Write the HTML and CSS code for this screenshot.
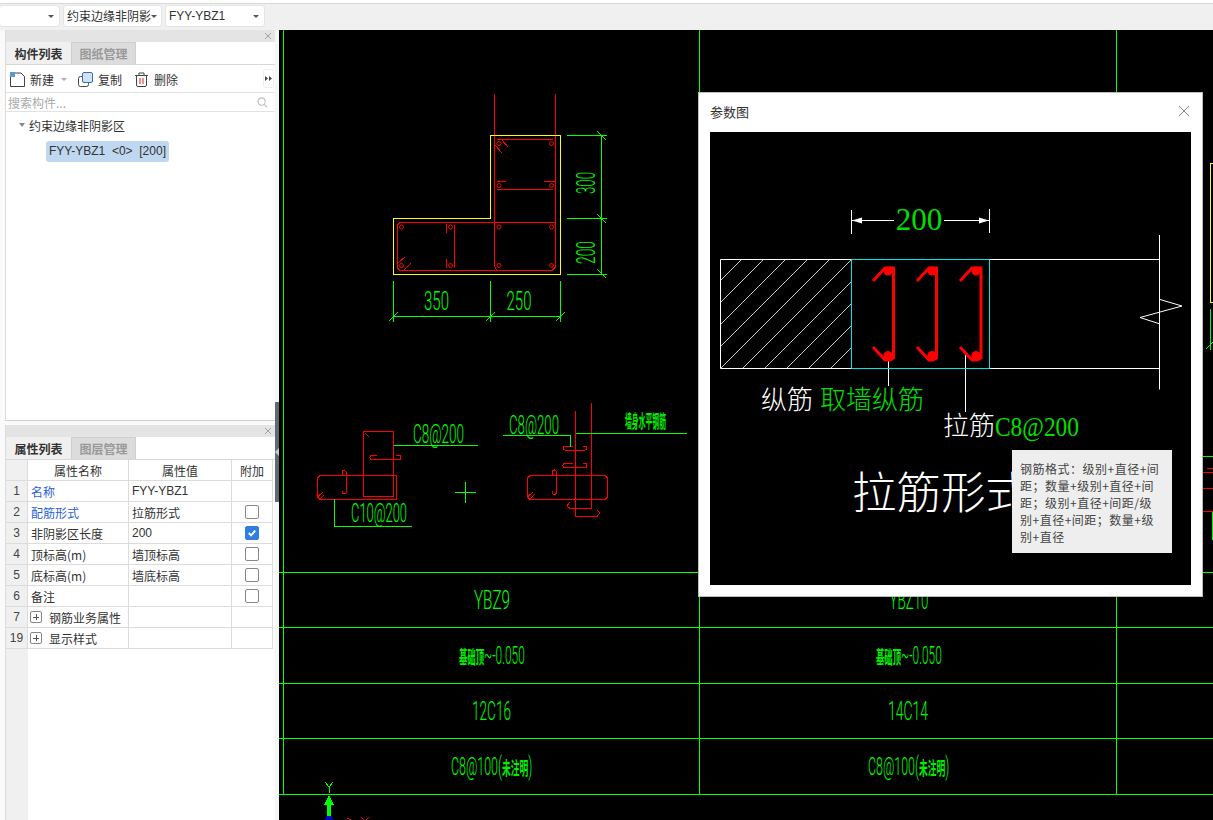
FILE: index.html
```html
<!DOCTYPE html>
<html lang="zh">
<head>
<meta charset="utf-8">
<title>参数图</title>
<link rel="stylesheet" href="styles.css">
</head>
<body>
<div class="app">
  <header class="topbar">
    <div class="combo combo-a"><span class="combo-text"></span><i class="caret"></i></div>
    <div class="combo combo-b"><span class="combo-text">约束边缘非阴影</span><i class="caret"></i></div>
    <div class="combo combo-c"><span class="combo-text">FYY-YBZ1</span><i class="caret"></i></div>
  </header>
  <div class="main">
    <aside class="sidebar">
      <section class="panel panel-top">
        <div class="panel-head"><svg class="x" viewBox="0 0 8 8"><path d="M1 1l6 6M7 1L1 7"/></svg></div>
        <div class="tabs">
          <div class="tab active">构件列表</div>
          <div class="tab">图纸管理</div>
        </div>
        <div class="toolbar">
          <span class="tool tool-new">
            <svg class="ico" viewBox="0 0 15 15"><path class="ol" d="M0.5 4V14.500H14.500V4.500L11 1H5"/><path class="blue" d="M0 0h5v5H0z"/></svg>
            新建<i class="caret light"></i>
          </span>
          <span class="tool tool-copy">
            <svg class="ico" viewBox="0 0 15 15"><rect class="ol" x="0.500" y="4.500" width="10" height="10" rx="2"/><rect class="fillblue" x="4.500" y="0.500" width="10" height="10" rx="1.500"/></svg>
            复制
          </span>
          <span class="tool tool-del">
            <svg class="ico" viewBox="0 0 13 15"><path class="ol" d="M0 3.500H13M4 3V1H9V3M1.500 3.500V13a1.500 1.500 0 0 0 1.500 1.500h7a1.500 1.500 0 0 0 1.500-1.500V3.500"/><path class="red" d="M5 6V12M8 6V12"/></svg>
            删除
          </span>
          <span class="more"><svg viewBox="0 0 7 5"><path d="M0 0l3 2.500L0 5ZM4 0l3 2.500L4 5Z"/></svg></span>
        </div>
        <div class="search">
          <span>搜索构件...</span>
          <svg class="search-ico" viewBox="0 0 12 12"><circle cx="5" cy="5" r="4"/><path d="M8 8l3 3"/></svg>
        </div>
        <div class="tree">
          <div class="tree-root"><i class="caret"></i>约束边缘非阴影区</div>
          <div class="tree-leaf">FYY-YBZ1 &nbsp;&lt;0&gt; &nbsp;[200]</div>
        </div>
      </section>
      <section class="panel panel-bottom">
        <div class="panel-head"><svg class="x" viewBox="0 0 8 8"><path d="M1 1l6 6M7 1L1 7"/></svg></div>
        <div class="tabs">
          <div class="tab active">属性列表</div>
          <div class="tab">图层管理</div>
        </div>
        <div class="grid">
          <div class="row head"><div class="n"></div><div class="k">属性名称</div><div class="v">属性值</div><div class="c">附加</div></div>
          <div class="row"><div class="n">1</div><div class="k link">名称</div><div class="v">FYY-YBZ1</div><div class="c"></div></div>
          <div class="row"><div class="n">2</div><div class="k link">配筋形式</div><div class="v">拉筋形式</div><div class="c"><i class="check"></i></div></div>
          <div class="row"><div class="n">3</div><div class="k">非阴影区长度</div><div class="v">200</div><div class="c"><i class="check on"><svg viewBox="0 0 13 13"><path d="M3 6.500l2.500 2.500L10 4"/></svg></i></div></div>
          <div class="row"><div class="n">4</div><div class="k">顶标高(m)</div><div class="v">墙顶标高</div><div class="c"><i class="check"></i></div></div>
          <div class="row"><div class="n">5</div><div class="k">底标高(m)</div><div class="v">墙底标高</div><div class="c"><i class="check"></i></div></div>
          <div class="row"><div class="n">6</div><div class="k">备注</div><div class="v"></div><div class="c"><i class="check"></i></div></div>
          <div class="row"><div class="n">7</div><div class="k"><i class="plus"></i>钢筋业务属性</div><div class="v"></div><div class="c"></div></div>
          <div class="row"><div class="n">19</div><div class="k"><i class="plus"></i>显示样式</div><div class="v"></div><div class="c"></div></div>
          <div class="grid-rest"><div class="n"></div></div>
        </div>
      </section>
    </aside>
    <div class="splitter"><span class="grip"><i class="grip-arrow"></i></span></div>
    <main class="canvas">
      <svg class="cad" viewBox="279 30 934 790" width="934" height="790">
        <!-- table grid -->
        <g class="g">
          <path d="M283.500 30V794M699.500 30V794M1116.500 30V794"/>
          <path d="M279 572.500H1213M279 627.500H1213M279 683.500H1213M279 738.500H1213M279 794.500H1213"/>
        </g>
        <!-- section L -->
        <g class="r">
          <path d="M494.500 94V266L497 270.500M555.500 94V267L552 270.500"/>
          <path d="M497 139.500H553M497 189.500H553M400 222.500H555M400 270.500H553M397.500 225V268L400 270.500M397.500 225L400 222.500M454.500 225V268"/>
          <path d="M446.500 224V233M446.500 259V268"/>
          <path d="M495 145L502 153M502 140L508 147M497 181.500H506M544 181.500H555M398 263L405 257M404 270L411 263"/>
          <circle cx="499" cy="143.500" r="2"/><circle cx="551.500" cy="143.500" r="2"/><circle cx="499" cy="185.500" r="2"/><circle cx="551.500" cy="185.500" r="2"/>
          <circle cx="401.500" cy="227" r="2"/><circle cx="450.500" cy="227" r="2"/><circle cx="499" cy="227" r="2"/><circle cx="551.500" cy="227" r="2"/>
          <circle cx="401.500" cy="265.500" r="2"/><circle cx="450.500" cy="265.500" r="2"/><circle cx="499" cy="265.500" r="2"/><circle cx="551.500" cy="265.500" r="2"/>
        </g>
        <path class="y" d="M490.500 135.500H560.500V274H393.500V218.500H490.500Z"/>
        <g class="g">
          <path d="M567 135.500H607M567 218.500H607M567 274H607M601.500 135.500V274M597 131l9 9M597 214l9 9M597 269l9 9"/>
          <path d="M393.500 281V322M490.500 281V322M560.500 281V322M393 316.500H561M389 321l9-9M486 321l9-9M556 321l9-9"/>
        </g>
        <text class="cadt" x="436.500" y="310" text-anchor="middle" textLength="25" lengthAdjust="spacingAndGlyphs">350</text>
        <text class="cadt" x="519" y="310" text-anchor="middle" textLength="25" lengthAdjust="spacingAndGlyphs">250</text>
        <text class="cadt" transform="translate(595 194) rotate(-90)" textLength="22" lengthAdjust="spacingAndGlyphs">300</text>
        <text class="cadt" transform="translate(595 264) rotate(-90)" textLength="23" lengthAdjust="spacingAndGlyphs">200</text>

        <!-- detail left -->
        <g class="r">
          <path d="M363.500 431.500H393.500V496.500H363.500ZM320 475.500H396.500V499.500H320L317.500 497V478ZM365 433L369 437M317.500 497L323 492M320 499L324 495"/>
          <path d="M377 455.500H372a2 2 0 0 0 0 4H399a2 2 0 0 0 0-4H396M342 476V471a2.500 2.500 0 0 1 4 1V493a2.500 2.500 0 0 1-4 0V491"/>
        </g>
        <g class="g">
          <path d="M394 445.500H478M334.500 499V526.500H412M465.500 482V503M455 492.500H476"/>
        </g>
        <text class="cadt" x="413" y="443" textLength="51" lengthAdjust="spacingAndGlyphs">C8@200</text>
        <text class="cadt" x="351" y="522" textLength="56" lengthAdjust="spacingAndGlyphs">C10@200</text>

        <!-- detail right -->
        <g class="r">
          <path d="M575.500 411V516.500H597L600 513L597 510M591.500 403V508.500H570L567 506L570 502"/>
          <path d="M530 475.500H605L607.500 478V497L605 499.500H530L527.500 497V478ZM527.500 497L533 492M530 499L535 494"/>
          <path d="M573 446H565a2 2 0 0 0 0 4H585a2 2 0 0 0 0-4H583M573 463.500H565a2 2 0 0 0 0 4H585a2 2 0 0 0 0-4H583M552 476V471a2.500 2.500 0 0 1 4.500 1V493a2.500 2.500 0 0 1-4.500 0V491"/>
        </g>
        <g class="g">
          <path d="M503 435.500H570.500V447M576 433.500H687"/>
        </g>
        <text class="cadt" x="509" y="434" textLength="50" lengthAdjust="spacingAndGlyphs">C8@200</text>
        <text class="cadcn" x="625" y="428" textLength="41" lengthAdjust="spacingAndGlyphs">墙身水平钢筋</text>

        <!-- table text -->
        <text class="cadt" x="492" y="609" text-anchor="middle" textLength="36" lengthAdjust="spacingAndGlyphs">YBZ9</text>
        <text class="cadt" x="909" y="609" text-anchor="middle" textLength="39" lengthAdjust="spacingAndGlyphs">YBZ10</text>
        <text class="cadt" transform="translate(459 664) scale(0.465 1)"><tspan class="cadcn">基础顶</tspan>~-0.050</text>
        <text class="cadt" transform="translate(876 664) scale(0.465 1)"><tspan class="cadcn">基础顶</tspan>~-0.050</text>
        <text class="cadt" x="491.500" y="720" text-anchor="middle" textLength="39" lengthAdjust="spacingAndGlyphs">12C16</text>
        <text class="cadt" x="908" y="720" text-anchor="middle" textLength="40" lengthAdjust="spacingAndGlyphs">14C14</text>
        <text class="cadt" transform="translate(451 775) scale(0.488 1)">C8@100(<tspan class="cadcn">未注明</tspan>)</text>
        <text class="cadt" transform="translate(868 775) scale(0.488 1)">C8@100(<tspan class="cadcn">未注明</tspan>)</text>

        <!-- axis -->
        <path class="gfill" d="M329 795L334 805H331V818H327V805H324Z"/>
        <circle class="axis-o" cx="329" cy="820" r="4"/>
        <path class="g1" d="M325 782L329 787L333 782M329 787V793"/>
        <path class="r1" d="M347 818L351 820M361 817L369 825M369 817L361 825"/>

        <!-- peek of content behind the dialog on right -->
        <path class="y" d="M1213 163.500H1210.500V302.500H1213"/>
        <path class="g1" d="M1210.500 309V350M1206 349L1213 342"/>
        <path class="g1" d="M1203 456.500H1213M1203 572.500H1213M1212.500 511V540"/>
        <path class="r1" d="M1203 472.500H1213M1203 488.500H1213M1203 511.500H1213M1207 468.500H1213"/>
      </svg>

      <div class="dialog">
        <div class="dlg-head">
          <span class="dlg-title">参数图</span>
          <svg class="dlg-x" viewBox="0 0 12 12"><path d="M1 1l10 10M11 1L1 11"/></svg>
        </div>
        <div class="dlg-body">
          <svg class="param" viewBox="710 132 481 453" width="481" height="453">
            <g class="w">
              <path d="M720.500 259.500H1159.500M720.500 368.500H1159.500M720.500 259.500V368.500"/>
              <path d="M1159.500 235V389.500"/>
              <path d="M851.500 210V234M989.500 209V233M852 220.500H894M944 220.500H989"/>
              <path d="M888.500 358V386M965.500 351V412"/>
              <path d="M1160 299.500L1182 306L1140 317.500L1160 324"/>
            </g>
            <path class="wfill" d="M852 220.500l10-3v6ZM989 220.500l-10-3v6Z"/>
            <path class="hatch" d="M742 259L721 280M764 259L721 302M786 259L721 324M808 259L721 346M830 259L721 368M851 260L743 368M851 282L765 368M851 304L787 368M851 326L809 368M851 348L831 368"/>
            <path class="cy" d="M851.500 259.500H989.500V368.500H851.500Z"/>
            <g class="rb">
              <path d="M873 281L885 268H893.500V358L890 360H885L873 347"/>
              <path d="M917 281L929 268H936.500V358L933 360H929L917 347"/>
              <path d="M960 281L972 268H981V358L977 360H972L960 347"/>
            </g>
            <g class="rd">
              <circle cx="888" cy="271" r="4.500"/><circle cx="932" cy="271" r="4.500"/><circle cx="976" cy="271" r="4.500"/>
              <circle cx="888" cy="355.500" r="4.500"/><circle cx="932" cy="355.500" r="4.500"/><circle cx="976" cy="355.500" r="4.500"/>
            </g>
            <text class="p-dim" x="919" y="230" text-anchor="middle">200</text>
            <text class="p-lab" x="761" y="409">纵筋<tspan class="p-cn" dx="7">取墙纵筋</tspan></text>
            <text class="p-lab" x="943" y="435">拉筋</text>
            <text class="p-g" x="995" y="436" textLength="84" lengthAdjust="spacingAndGlyphs">C8@200</text>
            <text class="p-big" x="852" y="509">拉筋形式</text>
          </svg>
          <div class="tooltip">钢筋格式：级别+直径+间距；数量+级别+直径+间距；级别+直径+间距/级别+直径+间距；数量+级别+直径</div>
        </div>
      </div>
    </main>
  </div>
</div>
</body>
</html>
```

FILE: styles.css
```css
* { box-sizing: border-box; }
html, body { margin: 0; height: 100%; overflow: hidden; }
body { font-family: "Noto Sans CJK SC", "Liberation Sans", sans-serif; font-size: 12px; color: #333; background: #fff; }
.app { width: 1213px; height: 820px; display: flex; flex-direction: column; overflow: hidden; }

.topbar { height: 27px; margin-top: 3px; flex: none; display: flex; gap: 3px; padding: 1px 0 0 0; background: #f0f0f0; border-top: 1px solid #d8d8d8; }
.combo { height: 22px; background: #fff; border: 1px solid #e4e4e4; border-radius: 3px; display: flex; align-items: center; justify-content: space-between; padding: 0 5px 0 3px; white-space: nowrap; overflow: hidden; line-height: 20px; color: #333; }
.combo-a { width: 61px; margin-left: -1px; }
.combo-b { width: 99px; padding-right: 4px; }
.combo-c { width: 100px; font-family: "Liberation Sans", sans-serif; }
.caret { display: inline-block; flex: none; width: 0; height: 0; border-left: 3px solid transparent; border-right: 3px solid transparent; border-top: 3px solid #555; }
.caret.light { border-top-color: #aaa; margin-left: 2px; vertical-align: middle; }

.main { flex: 1; display: flex; min-height: 0; }
.sidebar { width: 275px; flex: none; display: flex; flex-direction: column; padding-left: 5px; background: #fafafa; }
.splitter { width: 4px; flex: none; background: #f6f6f6; position: relative; }
.grip { position: absolute; left: 0; top: 372px; width: 4px; height: 100px; background: #5f6a74; }
.grip-arrow { position: absolute; left: 0; top: 46px; width: 0; height: 0; border-top: 4px solid transparent; border-bottom: 4px solid transparent; border-right: 4px solid #c8ccd0; }
.canvas { flex: 1; background: #000; position: relative; overflow: hidden; }

.panel { background: #fff; display: flex; flex-direction: column; border-left: 1px solid #dcdcdc; }
.panel-top { height: 391px; border-bottom: 1px solid #d0d0d0; }
.panel-bottom { flex: 1; margin-top: 4px; }
.panel-head { height: 12px; flex: none; background: #e4e4e4; display: flex; justify-content: flex-end; align-items: center; padding-right: 3px; }
.x { width: 8px; height: 8px; fill: none; stroke: #a0a0a0; stroke-width: 1; }
.tabs { height: 23px; flex: none; display: flex; background: #fff; border-bottom: 1px solid #d8d8d8; }
.tab { width: 65px; display: flex; align-items: center; justify-content: center; background: #dcdcdc; color: #999; font-weight: 700; font-size: 12px; border: 1px solid #cfcfcf; border-bottom: none; }
.tab.active { background: #f0f0f0; color: #333; border: none; }

.toolbar { height: 28px; flex: none; display: flex; align-items: center; position: relative; border-bottom: 1px solid #e2e2e2; font-size: 12px; padding-top: 1px; }
.tool { display: inline-flex; align-items: center; gap: 5px; color: #333; }
.tool-new { margin-left: 4px; }
.tool-copy { margin-left: 11px; }
.tool-del { margin-left: 13px; gap: 6px; }
.ico { width: 15px; height: 15px; flex: none; }
.tool-del .ico { width: 13px; }
.ol { fill: none; stroke: #444; stroke-width: 1; }
.blue { fill: #5b9bd5; }
.fillblue { fill: #cfe2f7; stroke: #3d6ea8; stroke-width: 1; }
.red { fill: none; stroke: #d22; stroke-width: 1; }
.more { position: absolute; right: 1px; top: 4px; width: 11px; height: 19px; border: 1px solid #eee; border-radius: 3px; background: #fff; display: flex; align-items: center; justify-content: center; }
.more svg { width: 7px; height: 5px; fill: #444; display: block; }

.search { height: 19px; flex: none; display: flex; align-items: center; justify-content: space-between; padding: 0 7px 0 2px; color: #aaa; border-bottom: 1px solid #e2e2e2; }
.search-ico { width: 11px; height: 11px; fill: none; stroke: #bbb; stroke-width: 1.200; }
.tree { flex: 1; padding-top: 2px; color: #333; }
.tree-root { height: 22px; padding-left: 13px; display: flex; align-items: center; }
.tree-root .caret { margin-right: 4px; border-top-color: #888; border-left-width: 3.500px; border-right-width: 3.500px; border-top-width: 4px; }
.tree-leaf { display: inline-block; margin: 5px 0 0 40px; height: 21px; line-height: 21px; padding: 0 3px; border-radius: 3px; background: #bfd7f0; font-family: "Liberation Sans", "Noto Sans CJK SC", sans-serif; white-space: nowrap; }

.grid { flex: 1; display: flex; flex-direction: column; background: #fff; }
.row { height: 21px; flex: none; display: grid; grid-template-columns: 22px 101px 103px 41px; border-bottom: 1px solid #dcdcdc; width: 267px; }
.row > div { display: flex; align-items: center; border-right: 1px solid #dcdcdc; white-space: nowrap; }
.row .n { background: #f0f0f0; justify-content: center; font-family: "Liberation Sans", sans-serif; color: #444; }
.row .k { padding-left: 3px; }
.row .v { padding-left: 3px; font-family: "Liberation Sans", "Noto Sans CJK SC", sans-serif; }
.row .c { justify-content: center; }
.head > div { justify-content: center; }
.head .k, .head .v { padding-left: 0; }
.head .v { font-family: "Noto Sans CJK SC", sans-serif; }
.row .link { color: #2a62d8; }
.check { width: 14px; height: 14px; border: 1px solid #888; border-radius: 2px; background: #fff; display: block; }
.check.on { background: #2f7fe0; border-color: #2f7fe0; }
.check svg { display: block; width: 12px; height: 12px; fill: none; stroke: #fff; stroke-width: 2; }
.plus { width: 12px; height: 12px; margin: 0 7px 0 -1px; border: 1px solid #888; border-radius: 2px; display: block; position: relative; flex: none; }
.plus::before { content: ""; position: absolute; left: 2px; top: 4.500px; width: 6px; height: 1px; background: #555; }
.plus::after { content: ""; position: absolute; left: 4.500px; top: 2px; width: 1px; height: 6px; background: #555; }
.grid-rest { flex: 1; display: flex; }
.grid-rest .n { width: 22px; background: #f0f0f0; }

.cad { display: block; position: absolute; left: 0; top: 0; shape-rendering: crispEdges; }
.cad path { fill: none; }
.cad circle { shape-rendering: geometricPrecision; }
.cad .g path, .cad .g1 { fill: none; stroke: #00ff00; stroke-width: 1; }
.cad .r path, .cad .r circle, .cad .r1 { fill: none; stroke: #ff0000; stroke-width: 1; }
.cad .y { stroke: #ffff00; stroke-width: 1; }
.cad .gfill { fill: #00ff00; }
.cad .axis-o { fill: #0000c8; }
.cadt { font-family: Roboto, "Liberation Sans", sans-serif; font-size: 25.500px; font-weight: 300; fill: #00ff00; }
.cadcn { font-family: "Noto Sans CJK SC", sans-serif; font-size: 18px; font-weight: 700; fill: #00f000; }

.dialog { position: absolute; left: 419px; top: 62px; width: 505px; height: 505px; background: #fff; border: 1px solid #bdbdbd; padding: 0 11px 0 11px; display: flex; flex-direction: column; }
.dlg-head { height: 39px; flex: none; display: flex; align-items: flex-start; justify-content: space-between; padding: 11px 1px 0 0; }
.dlg-title { font-size: 13px; line-height: 16px; color: #333; }
.dlg-x { width: 12px; height: 12px; margin-top: 1px; fill: none; stroke: #888; stroke-width: 1; }
.dlg-body { position: relative; width: 481px; height: 453px; background: #000; }
.param { display: block; }
.param .w path { fill: none; stroke: #fff; stroke-width: 1; }
.wfill { fill: #fff; }
.hatch { fill: none; stroke: #fff; stroke-width: 0.800; }
.cy { fill: none; stroke: #00e5e5; stroke-width: 1; }
.rb path { fill: none; stroke: #ff0000; stroke-width: 3; }
.rd { fill: #ff0000; }
.p-dim { font-family: "Liberation Serif", serif; font-size: 31px; fill: #00e000; }
.p-lab { font-family: "Noto Sans CJK SC", "Liberation Serif", serif; font-size: 26px; font-weight: 200; fill: #fff; }
.p-cn { fill: #00e000; font-weight: 200; }
.p-g { fill: #00e000; font-family: "Liberation Serif", serif; font-size: 27px; }
.p-big { font-family: "Noto Sans CJK SC", serif; font-size: 44.500px; font-weight: 200; fill: #fff; }
.tooltip { position: absolute; left: 302px; top: 318px; width: 160px; height: 103px; padding: 10px 11px 0 8px; background: #eeeeee; color: #444; font-size: 12px; letter-spacing: 0.500px; line-height: 17px; font-family: "Noto Sans CJK TC", "Noto Sans CJK SC", sans-serif; }
```
